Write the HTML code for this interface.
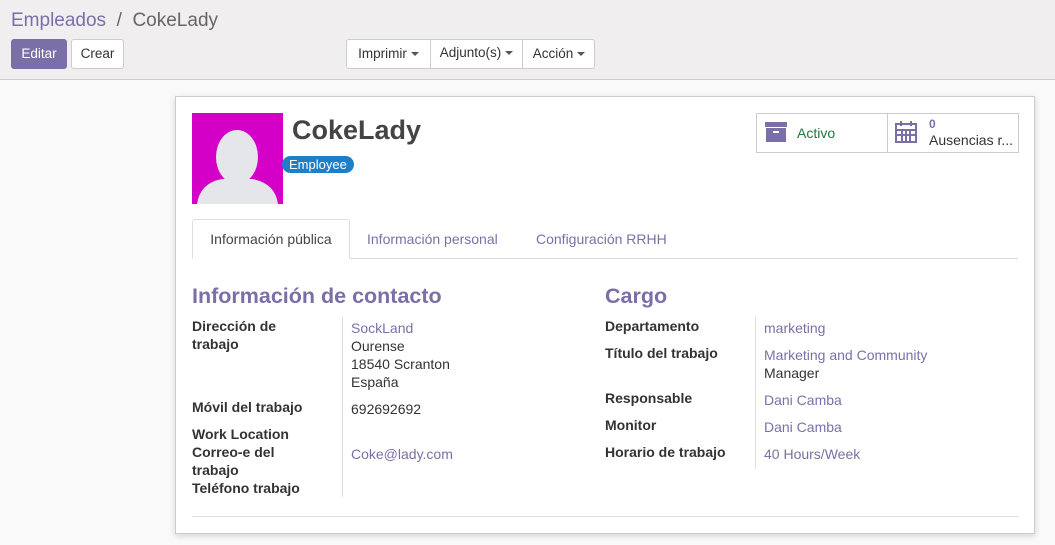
<!DOCTYPE html>
<html><head><meta charset="utf-8"><style>
*{box-sizing:border-box;margin:0;padding:0}
body{width:1055px;height:545px;overflow:hidden;background:#f9f9f9;font-family:"Liberation Sans","DejaVu Sans",sans-serif;font-size:14px;color:#4c4c4c;position:relative}
.top{position:absolute;left:0;top:0;width:1055px;height:80px;background:#f0eeee;border-bottom:1px solid #ccc}
.bc{position:absolute;left:11px;top:10px;font-size:19px;color:#666}
.bc a{color:#7c6fa8}
.btn{position:absolute;height:30px;line-height:28px;border:1px solid #ccc;background:#fff;border-radius:3px;font-size:13.5px;color:#333;text-align:center}
.car{display:inline-block;border-left:4px solid transparent;border-right:4px solid transparent;border-top:4px solid #555;vertical-align:middle;margin-left:4px}
.sheet{position:absolute;left:175px;top:96px;width:860px;height:438px;background:#fff;border:1px solid #ccc;box-shadow:0 2px 6px rgba(0,0,0,.15)}
.abs{position:absolute}
.lbl{position:absolute;font-weight:bold;color:#333;line-height:18px}
.val{position:absolute;line-height:18px;color:#333}
.sheet .p{color:#7c6fa8}
</style></head><body>
<div class="top">
<div class="bc"><a>Empleados</a> &nbsp;/ &nbsp;CokeLady</div>
<div class="btn" style="left:11px;top:39px;width:56px;background:#7c6fa8;border-color:#7c6fa8;color:#fff">Editar</div>
<div class="btn" style="left:71px;top:39px;width:53px">Crear</div>
<div class="btn" style="left:346px;top:39px;width:249px;padding:0">
<span class="abs" style="left:0;width:83px;top:0">Imprimir<span class="car"></span></span>
<span class="abs" style="left:83px;width:93px;top:-1px;height:30px;border-left:1px solid #ccc;border-right:1px solid #ccc">Adjunto(s)<span class="car"></span></span>
<span class="abs" style="left:176px;width:72px;top:0">Acción<span class="car"></span></span>
</div>
</div>
<div class="sheet">
<div class="abs" style="left:16px;top:16px;width:91px;height:91px;background:#d400c8;overflow:hidden">
<svg width="91" height="91"><ellipse cx="45" cy="44" rx="21" ry="27" fill="#e4e6ea"/><path d="M5 91 Q8 70 30 66 L60 66 Q83 70 86 91Z" fill="#e4e6ea"/></svg></div>
<div class="abs" style="left:116px;top:18px;font-size:27px;font-weight:bold;color:#444">CokeLady</div>
<div class="abs" style="left:106px;top:59px;background:#1d7fc7;color:#fff;border-radius:9px;padding:1px 7px;font-size:13px;line-height:15px">Employee</div>
<div class="abs" style="left:580px;top:16px;width:263px;height:40px;border:1px solid #ccc">
<div class="abs" style="left:130px;top:0;width:1px;height:38px;background:#ccc"></div>
<svg class="abs" style="left:8px;top:8px" width="22" height="20"><rect x="0" y="0" width="22" height="5" fill="#7c6fa8"/><rect x="1" y="6" width="20" height="14" fill="#7c6fa8"/><rect x="8" y="9" width="6" height="2" fill="#fff"/></svg>
<div class="abs" style="left:40px;top:11px;color:#1e7a3c">Activo</div>
<svg class="abs" style="left:138px;top:6px" width="22" height="24" fill="none" stroke="#7c6fa8" stroke-width="2"><rect x="1" y="4" width="20" height="18"/><path d="M1 10H21M1 15H21M7 10V22M11 10V22M15 10V22M6 1V6M16 1V6"/></svg>
<div class="abs" style="left:172px;top:3px;color:#7c6fa8;font-weight:bold;font-size:12px">0</div>
<div class="abs" style="left:172px;top:18px;color:#333">Ausencias r...</div>
</div>
<div class="abs" style="left:16px;top:161px;width:826px;height:1px;background:#ddd"></div>
<div class="abs" style="left:16px;top:122px;width:158px;height:40px;border:1px solid #ddd;border-bottom:1px solid #fff;background:#fff;border-radius:3px 3px 0 0;line-height:38px;text-align:center;color:#444">Información pública</div>
<div class="abs p" style="left:191px;top:134px">Información personal</div>
<div class="abs p" style="left:360px;top:134px">Configuración RRHH</div>
<div class="abs p" style="left:16px;top:187px;font-size:21.5px;font-weight:bold">Información de contacto</div>
<div class="abs p" style="left:429px;top:187px;font-size:21.5px;font-weight:bold">Cargo</div>
<div class="abs" style="left:166px;top:220px;width:1px;height:180px;background:#ddd"></div>
<div class="abs" style="left:579px;top:220px;width:1px;height:152px;background:#ddd"></div>
<div class="lbl" style="left:16px;top:220px">Dirección de<br>trabajo</div>
<div class="val" style="left:175px;top:222px"><span class="p">SockLand</span><br>Ourense<br>18540 Scranton<br>España</div>
<div class="lbl" style="left:16px;top:301px">Móvil del trabajo</div>
<div class="val" style="left:175px;top:303px">692692692</div>
<div class="lbl" style="left:16px;top:328px">Work Location<br>Correo-e del<br>trabajo<br>Teléfono trabajo</div>
<div class="val p" style="left:175px;top:348px">Coke@lady.com</div>
<div class="lbl" style="left:429px;top:220px">Departamento</div>
<div class="val p" style="left:588px;top:222px">marketing</div>
<div class="lbl" style="left:429px;top:247px">Título del trabajo</div>
<div class="val" style="left:588px;top:249px"><span class="p">Marketing and Community</span><br>Manager</div>
<div class="lbl" style="left:429px;top:292px">Responsable</div>
<div class="val p" style="left:588px;top:294px">Dani Camba</div>
<div class="lbl" style="left:429px;top:319px">Monitor</div>
<div class="val p" style="left:588px;top:321px">Dani Camba</div>
<div class="lbl" style="left:429px;top:346px">Horario de trabajo</div>
<div class="val p" style="left:588px;top:348px">40 Hours/Week</div>
<div class="abs" style="left:16px;top:419px;width:826px;height:1px;background:#ddd"></div>
</div>
</body></html>
